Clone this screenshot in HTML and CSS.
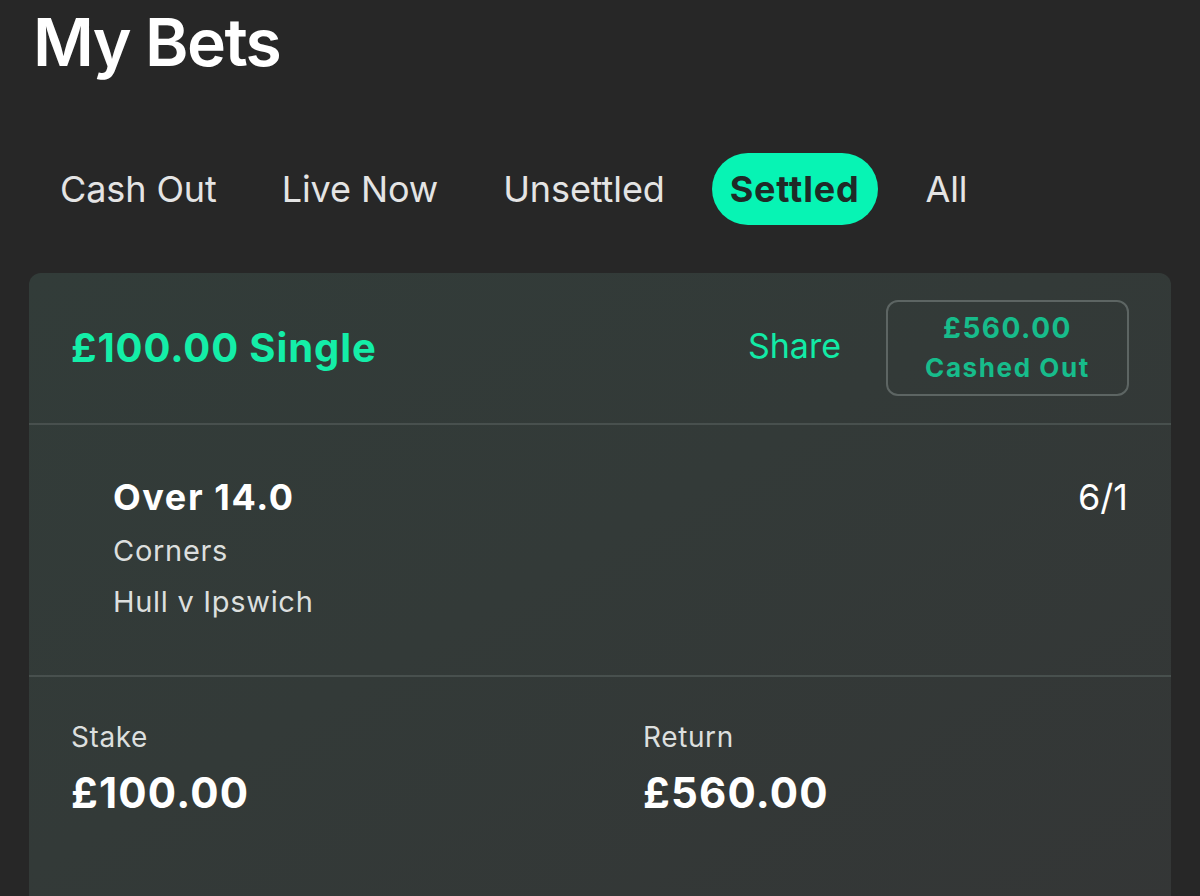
FILE: index.html
```html
<!DOCTYPE html>
<html lang="en">
<head>
<meta charset="utf-8">
<title>My Bets</title>
<link rel="stylesheet" href="styles.css">
</head>
<body>
<main class="page">
  <h1 class="title">My Bets</h1>
  <nav class="tabs">
    <span class="tab">Cash Out</span>
    <span class="tab">Live Now</span>
    <span class="tab">Unsettled</span>
    <span class="tab tab-active">Settled</span>
    <span class="tab">All</span>
  </nav>
  <section class="card">
    <div class="card-head">
      <div class="bet-type">£100.00 Single</div>
      <div class="share">Share</div>
      <div class="cashed">
        <div class="cashed-amount">£560.00</div>
        <div class="cashed-label">Cashed Out</div>
      </div>
    </div>
    <div class="selection">
      <div class="sel-info">
        <div class="sel-name">Over 14.0</div>
        <div class="sel-market">Corners</div>
        <div class="sel-event">Hull v Ipswich</div>
      </div>
      <div class="sel-odds">6/1</div>
    </div>
    <div class="totals">
      <div class="total">
        <div class="total-label">Stake</div>
        <div class="total-value">£100.00</div>
      </div>
      <div class="total">
        <div class="total-label">Return</div>
        <div class="total-value">£560.00</div>
      </div>
    </div>
  </section>
</main>
</body>
</html>
```
FILE: styles.css
```css
html, body {
  margin: 0;
  padding: 0;
  background: #272727;
  height: 100%;
  overflow: hidden;
}
body {
  font-family: Inter, "Noto Sans", "Liberation Sans", sans-serif;
  color: #ffffff;
}
.page {
  display: flex;
  flex-direction: column;
}
.title {
  margin: 0;
  padding: 9px 0 0 33px;
  font-size: 66px;
  line-height: 66px;
  font-weight: 600;
  letter-spacing: -1.6px;
  color: #ffffff;
}
.tabs {
  display: flex;
  align-items: center;
  gap: 29px;
  margin-top: 78px;
  padding-left: 42px;
}
.tab {
  padding: 0 18px;
  height: 72px;
  line-height: 72px;
  font-size: 36px;
  font-weight: 400;
  letter-spacing: -0.1px;
  color: #e4e4e4;
  border-radius: 36px;
}
.tab-active {
  padding: 0 19px 0 18px;
  background: #07f4b4;
  color: #1f2a27;
  font-weight: 700;
  letter-spacing: 0.8px;
}
.card {
  margin: 48px 29px 0;
  border-radius: 12px;
  background: linear-gradient(150deg, #323c39 0%, #333a38 45%, #343636 100%);
  padding-bottom: 120px;
}
.card-head {
  display: flex;
  align-items: center;
  padding: 27px 42px 27px 42px;
  border-bottom: 2px solid #48504e;
}
.bet-type {
  flex: 1;
  font-size: 40px;
  line-height: 48px;
  font-weight: 700;
  letter-spacing: 0.9px;
  color: #14eea8;
}
.share {
  font-size: 34px;
  line-height: 44px;
  color: #12eba6;
  margin-right: 45px;
  margin-top: -4px;
}
.cashed {
  box-sizing: border-box;
  width: 243px;
  height: 96px;
  border: 2px solid #5d6563;
  border-radius: 12px;
  padding-top: 6px;
  text-align: center;
  color: #17bc8b;
  font-weight: 700;
}
.cashed-amount {
  font-size: 28px;
  line-height: 40px;
  letter-spacing: 1.5px;
}
.cashed-label {
  font-size: 26px;
  line-height: 40px;
  letter-spacing: 1.6px;
}
.selection {
  display: flex;
  justify-content: space-between;
  align-items: flex-start;
  padding: 50px 43px 55px 84px;
  border-bottom: 2px solid #48504e;
}
.sel-name {
  font-size: 36px;
  line-height: 44px;
  font-weight: 700;
  letter-spacing: 1.6px;
}
.sel-market,
.sel-event {
  font-size: 29px;
  line-height: 36px;
  color: #dcdfde;
  letter-spacing: 0.7px;
}
.sel-market { margin-top: 14px; }
.sel-event { margin-top: 15px; }
.sel-odds {
  font-size: 36px;
  line-height: 44px;
  color: #ffffff;
}
.totals {
  display: grid;
  grid-template-columns: 572px 1fr;
  padding: 43px 42px 0 42px;
}
.total-label {
  font-size: 28px;
  line-height: 34px;
  color: #dcdfde;
  letter-spacing: 0.6px;
}
.total-value {
  margin-top: 14px;
  font-size: 42px;
  line-height: 50px;
  font-weight: 700;
  letter-spacing: 1.2px;
}
```
